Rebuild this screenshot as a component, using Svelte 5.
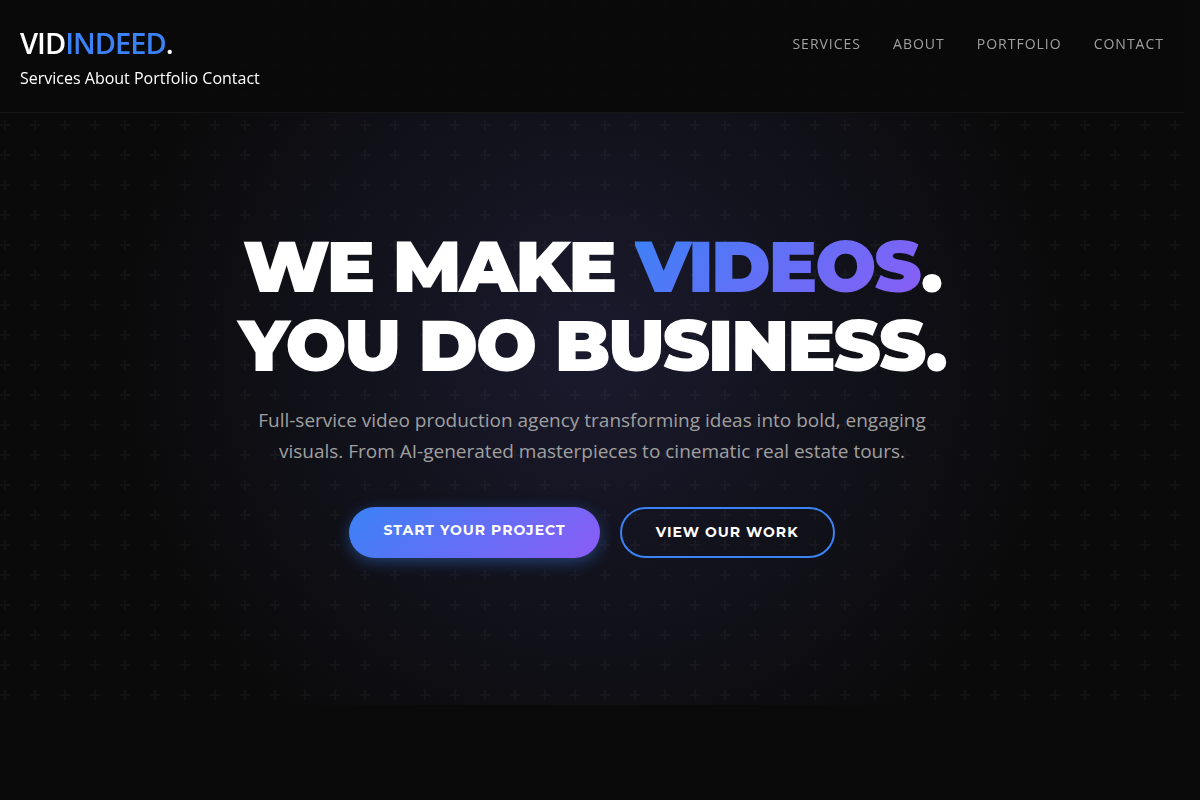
<script>
	const links = ['Services', 'About', 'Portfolio', 'Contact'];
</script>

<div class="page">
	<header class="header">
		<div class="brand">
			<a class="logo" href="#home">VID<span>INDEED</span>.</a>
			<p class="tagline">Services About Portfolio Contact</p>
		</div>
		<nav class="nav" aria-label="Main">
			{#each links as link}
				<a href="#{link.toLowerCase()}">{link}</a>
			{/each}
		</nav>
	</header>

	<section class="hero" id="home">
		<h1>WE MAKE <span class="gradient-text">VIDEOS</span>.<br />YOU DO BUSINESS.</h1>
		<p class="lead">
			Full-service video production agency transforming ideas into bold, engaging visuals. From
			AI-generated masterpieces to cinematic real estate tours.
		</p>
		<div class="actions">
			<a class="btn btn-primary" href="#contact">Start Your Project</a>
			<a class="btn btn-outline" href="#portfolio">View Our Work</a>
		</div>
	</section>
</div>

<style>
	:global(body) {
		background: #0a0a0a;
	}

	.page {
		padding-right: 16px;
		color: #ffffff;
		font-family: 'Open Sans', 'Noto Sans', sans-serif;
	}

	a {
		color: inherit;
		text-decoration: none;
	}

	.header {
		position: fixed;
		top: 0;
		left: 0;
		right: 16px;
		z-index: 10;
		display: flex;
		justify-content: space-between;
		align-items: flex-start;
		padding: 20px;
		background: rgba(10, 10, 10, 0.95);
		border-bottom: 1px solid rgba(255, 255, 255, 0.05);
	}

	.logo {
		display: block;
		font-size: 29px;
		font-weight: 600;
		line-height: 46px;
		letter-spacing: -1px;
	}

	.logo span {
		color: #3b82f6;
	}

	.tagline {
		margin: 0;
		font-size: 16px;
		font-weight: 500;
		line-height: 24px;
		padding-bottom: 2px;
	}

	.nav {
		display: flex;
		gap: 32px;
		font-size: 14px;
		line-height: 48px;
		letter-spacing: 1px;
		text-transform: uppercase;
		color: #a0a0a0;
	}

	.hero {
		display: flex;
		flex-direction: column;
		align-items: center;
		padding: 227px 20px 147px;
		text-align: center;
		background:
			url("data:image/svg+xml,%3Csvg width='30' height='30' xmlns='http://www.w3.org/2000/svg'%3E%3Cpath d='M4 0h2v4h4v2H6v4H4V6H0V4h4z' fill='%23ffffff' fill-opacity='0.03'/%3E%3C/svg%3E"),
			radial-gradient(circle at center, #1a1a2e 0%, #0a0a0a 70%);
	}

	h1 {
		margin: 0 0 20px;
		font-family: 'Montserrat', 'Inter', sans-serif;
		font-size: 72px;
		font-weight: 900;
		line-height: 79px;
		letter-spacing: -2px;
	}

	.gradient-text {
		background: linear-gradient(135deg, #3b82f6, #8b5cf6);
		-webkit-background-clip: text;
		background-clip: text;
		color: transparent;
	}

	.lead {
		max-width: 700px;
		margin: 0 0 40px;
		font-size: 19px;
		line-height: 31px;
		color: #a0a0a0;
	}

	.actions {
		display: flex;
		gap: 20px;
	}

	.btn {
		padding: 16px 34px;
		border-radius: 50px;
		font-family: 'Montserrat', 'Inter', sans-serif;
		font-size: 14px;
		font-weight: 700;
		line-height: 15px;
		letter-spacing: 1px;
		text-transform: uppercase;
	}

	.btn-primary {
		background: linear-gradient(135deg, #3b82f6, #8b5cf6);
		box-shadow: 0 4px 15px rgba(59, 130, 246, 0.4);
	}

	.btn-outline {
		border: 2px solid #3b82f6;
	}
</style>
